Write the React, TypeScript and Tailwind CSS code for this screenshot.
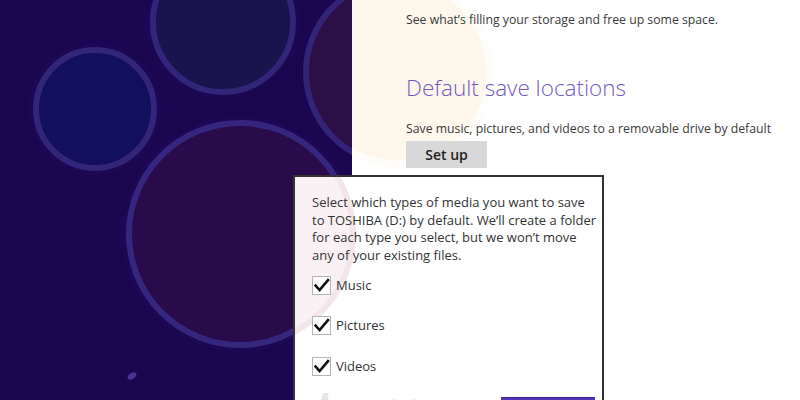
import React from "react";

function Check() {
  return (
    <span className="relative inline-block w-[19px] h-[19px] shrink-0 border border-[#b4b4b4] bg-white">
      <svg width="19" height="19" viewBox="0 0 19 19" className="absolute -left-px -top-px">
        <path d="M3.6 9.6 L7.6 14 L16 4.2" fill="none" stroke="#111" strokeWidth="2.6" strokeLinecap="square" strokeLinejoin="miter" />
      </svg>
    </span>
  );
}

function Row({ label }: { label: string }) {
  return (
    <div className="flex items-center gap-[5px] h-[19px]">
      <Check />
      <span className="text-[13px] text-[#333]">{label}</span>
    </div>
  );
}

export default function App() {
  return (
    <div
      className="relative flex w-[800px] h-[400px] overflow-hidden bg-white"
      style={{ fontFamily: '"Open Sans", "Noto Sans", sans-serif' }}
    >
      {/* wallpaper */}
      <div className="w-[352px] h-[400px] shrink-0 bg-[#1b0652]">
        <svg width="352" height="400" viewBox="0 0 352 400" className="block">
          <rect width="352" height="400" fill="#1b0652" />
          <circle cx="95" cy="109" r="66" fill="#3b2a84" opacity="0.08" />
          <circle cx="95" cy="109" r="59" fill="#120f5c" stroke="#32257a" strokeWidth="6" />
          <circle cx="223" cy="22" r="76" fill="#3b2a84" opacity="0.08" />
          <circle cx="223" cy="22" r="70" fill="#19134e" stroke="#32257a" strokeWidth="6" />
          <circle cx="398" cy="72" r="92" fill="#2c0f46" stroke="#332478" strokeWidth="6" />
          <circle cx="240" cy="234" r="118" fill="#3b2a84" opacity="0.07" />
          <circle cx="240" cy="234" r="111" fill="#290a4a" stroke="#37267e" strokeWidth="6" />
          <ellipse cx="132" cy="376" rx="5" ry="3" fill="#46349a" transform="rotate(-35 132 376)" />
        </svg>
      </div>

      {/* settings panel */}
      <div className="relative flex-1 bg-white pl-[54px] pt-[11px]">
        <svg width="160" height="180" viewBox="0 0 160 180" className="absolute left-0 top-0 pointer-events-none">
          <circle cx="46" cy="72" r="92" fill="#fdf7ec" stroke="#fffdf9" strokeWidth="7" />
        </svg>
        <div className="relative">
          <p className="text-[12.25px] leading-[18px] text-[#3a3a3a]">See what’s filling your storage and free up some space.</p>
          <h2 className="mt-[43px] text-[22.5px] leading-[32px] font-light text-[#735ac3]">Default save locations</h2>
          <p className="mt-[16px] text-[12.25px] leading-[18px] text-[#3a3a3a]">Save music, pictures, and videos to a removable drive by default</p>
          <button className="mt-[3px] w-[81px] h-[27px] bg-[#d8d8d8] text-[14px] font-semibold text-[#222]">Set up</button>
        </div>
      </div>

      {/* flyout */}
      <div className="absolute left-[293px] top-[175px] w-[311px] h-[240px] border-2 border-[#333] bg-white overflow-hidden">
        <svg width="120" height="200" viewBox="0 0 120 200" className="absolute left-0 top-0 pointer-events-none">
          <circle cx="-53" cy="57" r="111" fill="#f9f1f3" stroke="#f4e5e9" strokeWidth="6" />
        </svg>
        <div aria-hidden="true" className="absolute left-[21px] top-[206px] text-[50px] font-bold leading-none text-[#e6e6e6] tracking-[2px] select-none">
          ture
        </div>
        <div className="relative pl-[17px] pt-[17px]">
          <p className="text-[13px] leading-[17.7px] text-[#333] whitespace-nowrap">
            Select which types of media you want to save
            <br />
            to TOSHIBA (D:) by default. We’ll create a folder
            <br />
            for each type you select, but we won’t move
            <br />
            any of your existing files.
          </p>
          <div className="mt-[11px] flex flex-col gap-[21.5px]">
            <Row label="Music" />
            <Row label="Pictures" />
            <Row label="Videos" />
          </div>
        </div>
        <div className="absolute left-[206px] top-[220px] w-[94px] h-[30px] bg-[#5533b5] border-t border-[#3d2090]" />
      </div>
    </div>
  );
}
